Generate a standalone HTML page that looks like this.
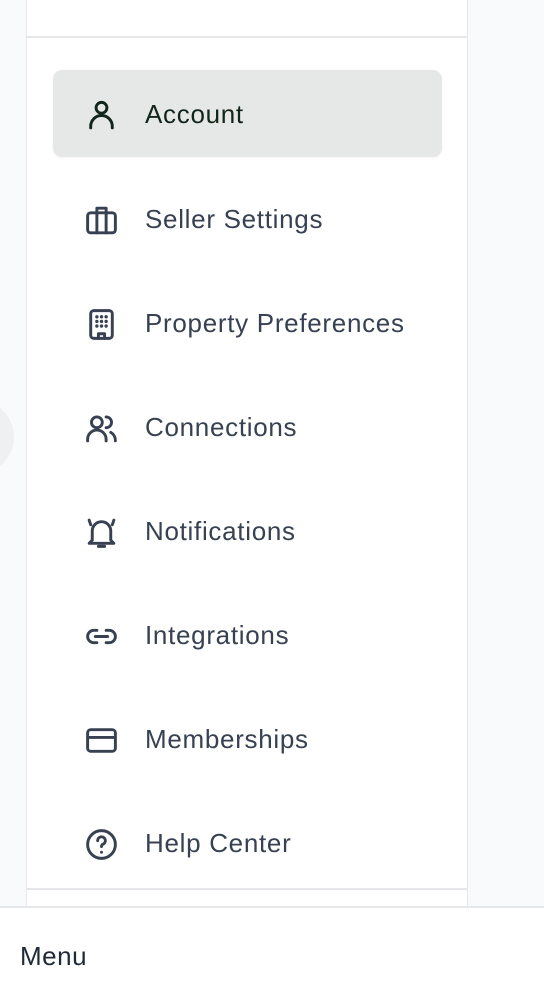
<!DOCTYPE html>
<html><head><meta charset="utf-8"><style>
*{margin:0;padding:0;box-sizing:border-box}
body{width:544px;height:996px;background:#f9fafb;position:relative;overflow:hidden;font-family:"Liberation Sans",sans-serif}
.panel{position:absolute;left:26px;top:0;width:442px;height:907px;background:#fff;border-left:1.5px solid #e5e7eb;border-right:1.5px solid #e5e7eb}
.div1{position:absolute;left:0;right:0;top:36px;border-top:2px solid #e5e7eb}
.div2{position:absolute;left:0;right:0;top:888px;border-top:2px solid #e5e7eb}
.item{position:absolute;left:26px;width:389px;height:87px;display:flex;align-items:center;font-size:26px;color:#374151;letter-spacing:0.7px}
.item svg{position:absolute;left:30px;top:27px;width:37px;height:37px;fill:none;stroke:#374151;stroke-width:1.9;stroke-linecap:round;stroke-linejoin:round}
.item span{position:absolute;left:92px;top:29px;line-height:30px}
.active{background:#e6e8e7;border-radius:9px;color:#13261c;box-shadow:0 1px 2px rgba(0,0,0,.05)}
.active svg{stroke:#13261c}
.circ{position:absolute;left:-60px;top:400px;width:74px;height:74px;border-radius:50%;background:#eef0f2}
.bottom{position:absolute;left:0;top:906px;width:544px;height:90px;background:#fff;border-top:2px solid #e5e7eb}
.bottom span{position:absolute;left:20px;top:33px;font-size:26px;color:#1f2937;letter-spacing:0.5px}
</style></head><body>
<div class="circ"></div>
<div class="panel">
<div class="div1"></div>
<div class="item active" style="top:70px"><svg viewBox="0 0 24 24"><circle cx="12" cy="7" r="3.5"/><path d="M5 20v-1a6 6 0 0 1 14 0v1"/></svg><span>Account</span></div>
<div class="item" style="top:175px"><svg viewBox="0 0 24 24"><rect x="3" y="7" width="18" height="13" rx="2"/><path d="M9 7V4h6v3M9 7v13M15 7v13"/></svg><span>Seller Settings</span></div>
<div class="item" style="top:279px"><svg viewBox="0 0 24 24"><rect x="5" y="3" width="14" height="18" rx="2"/><path d="M10 21v-3h4v3"/><path d="M9 7h.01M12 7h.01M15 7h.01M9 10h.01M12 10h.01M15 10h.01M9 13h.01M12 13h.01M15 13h.01" stroke-width="2.2"/></svg><span>Property Preferences</span></div>
<div class="item" style="top:383px"><svg viewBox="0 0 24 24"><circle cx="9" cy="8" r="3.5"/><path d="M3 20v-1a6 6 0 0 1 12 0v1M15 4.5a3.5 3.5 0 0 1 0 7M18 14.5a6 6 0 0 1 3 5.5"/></svg><span>Connections</span></div>
<div class="item" style="top:487px"><svg viewBox="0 0 24 24"><path d="M6 17V11a6 6 0 0 1 12 0v6l2 2H4l2-2zM10 21h4M4 4l1 3M20 4l-1 3"/></svg><span>Notifications</span></div>
<div class="item" style="top:591px"><svg viewBox="0 0 24 24"><path d="M9 8H7a4 4 0 0 0 0 8h2M15 8h2a4 4 0 0 1 0 8h-2M8 12h8"/></svg><span>Integrations</span></div>
<div class="item" style="top:695px"><svg viewBox="0 0 24 24"><rect x="3" y="5" width="18" height="14" rx="2"/><path d="M3 10h18"/></svg><span>Memberships</span></div>
<div class="item" style="top:799px"><svg viewBox="0 0 24 24"><circle cx="12" cy="12" r="9"/><path d="M9.5 9.5a2.5 2.5 0 1 1 3.5 2.3c-.6.3-1 .8-1 1.5M12 17h.01"/></svg><span>Help Center</span></div>
<div class="div2"></div>
</div>
<div class="bottom"><span>Menu</span></div>
</body></html>
